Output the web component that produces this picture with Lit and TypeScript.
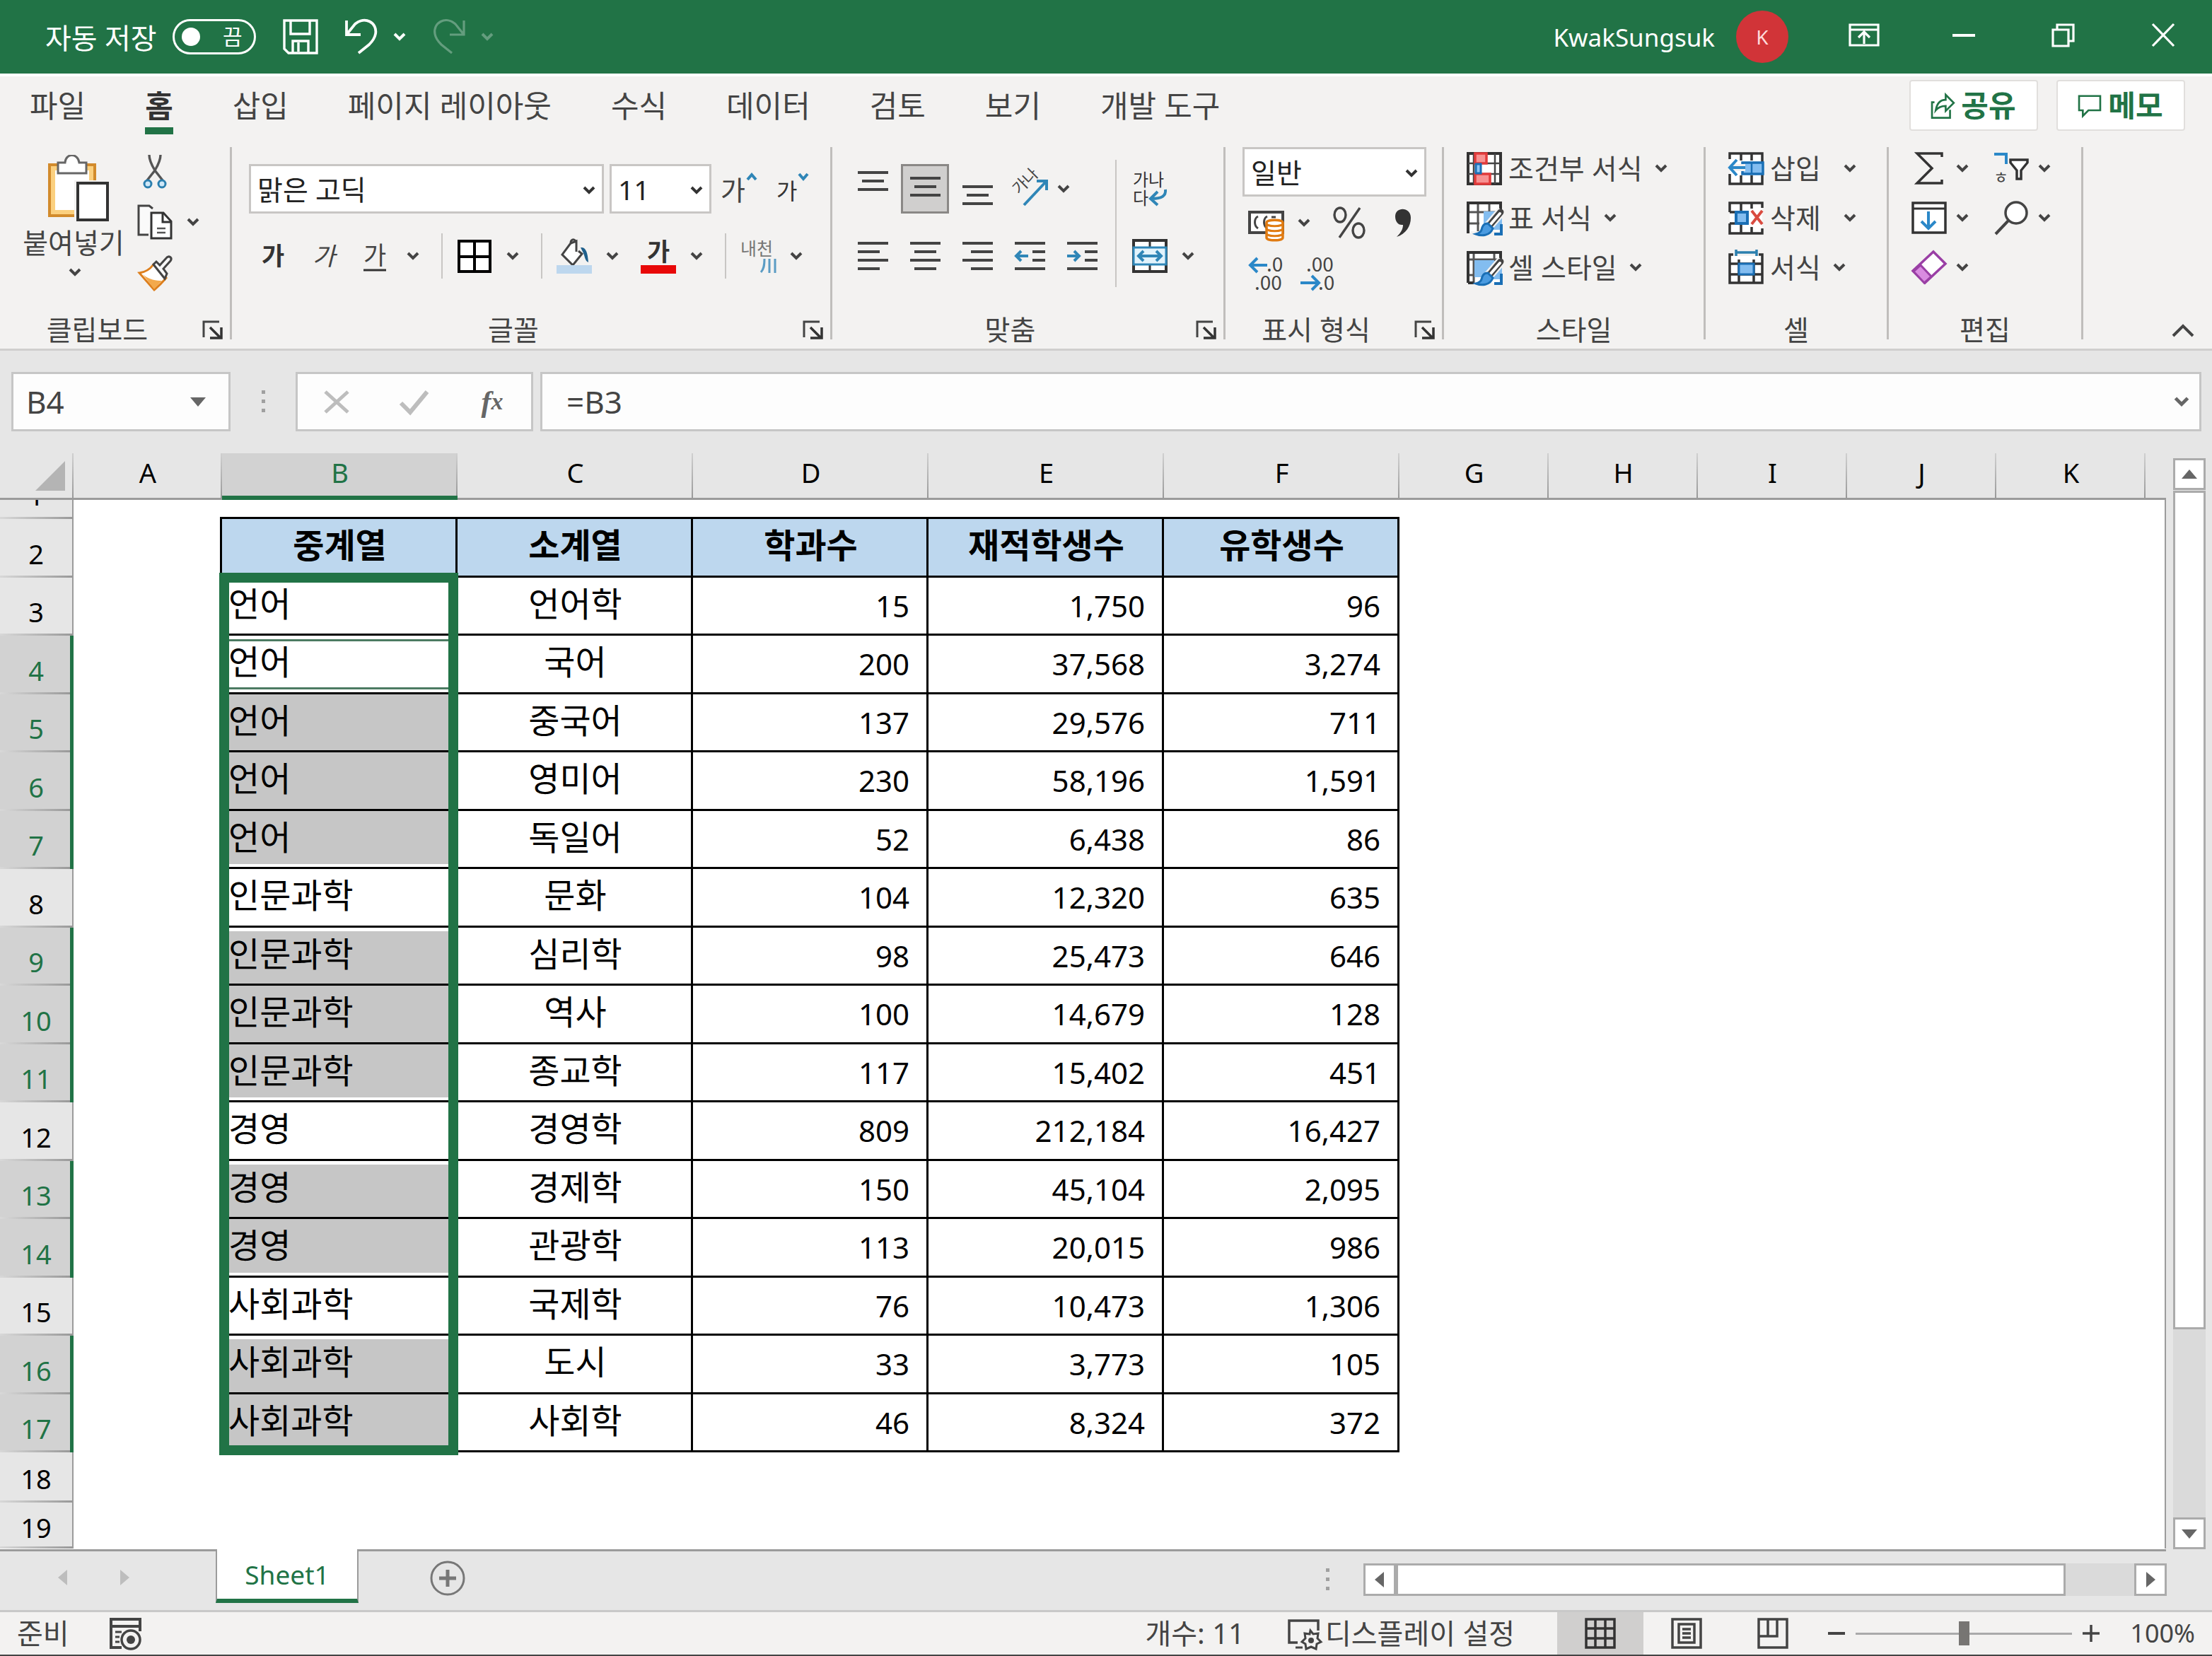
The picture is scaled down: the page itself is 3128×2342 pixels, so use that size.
import { LitElement, html, svg, css, nothing } from "lit";
import { customElement, property } from "lit/decorators.js";
import { classMap } from "lit/directives/class-map.js";

type Row = [string, string, string, string, string];

const DATA: Row[] = [
  ["언어", "언어학", "15", "1,750", "96"],
  ["언어", "국어", "200", "37,568", "3,274"],
  ["언어", "중국어", "137", "29,576", "711"],
  ["언어", "영미어", "230", "58,196", "1,591"],
  ["언어", "독일어", "52", "6,438", "86"],
  ["인문과학", "문화", "104", "12,320", "635"],
  ["인문과학", "심리학", "98", "25,473", "646"],
  ["인문과학", "역사", "100", "14,679", "128"],
  ["인문과학", "종교학", "117", "15,402", "451"],
  ["경영", "경영학", "809", "212,184", "16,427"],
  ["경영", "경제학", "150", "45,104", "2,095"],
  ["경영", "관광학", "113", "20,015", "986"],
  ["사회과학", "국제학", "76", "10,473", "1,306"],
  ["사회과학", "도시", "33", "3,773", "105"],
  ["사회과학", "사회학", "46", "8,324", "372"],
];
const HEADERS = ["중계열", "소계열", "학과수", "재적학생수", "유학생수"];
const COLUMNS = ["A", "B", "C", "D", "E", "F", "G", "H", "I", "J", "K"];
const SELECTED = new Set([4, 5, 6, 7, 9, 10, 11, 13, 14, 16, 17]);
const ACTIVE_ROW = 4;

const hlines = (segs: number[][]) =>
  segs.map(([x1, x2, y]) => svg`<path d="M${x1} ${y}H${x2}" stroke="#444" stroke-width="4"/>`);

const gridPen = svg`
  <path d="M24 16h26v26h-26z" fill="#83bdf0"/>
  <path d="M49 34v14h-10" stroke="#1a6fb5" stroke-width="4"/>
  <path d="M50 15L30 38" stroke="#f3f2f1" stroke-width="14"/>
  <path d="M48 17L33 35" stroke="#444" stroke-width="9" stroke-linecap="round"/>
  <path d="M47 19L34 34" stroke="#fff" stroke-width="4" stroke-linecap="round"/>
  <path d="M30 33c-7 0-8 5-9 9-1 3-4 5-8 6 8 3 20 3 24-8z" fill="#4a9be0" stroke="#1a6fb5" stroke-width="3"/>`;

const ICONS: Record<string, unknown> = {
  save: svg`<path d="M2 2h46v46H8l-6-6z M11 2v19h27V2 M14 48V31h22v17 M22 33v13" stroke="currentColor" stroke-width="3.4"/>`,
  undo: svg`<path d="M4 2v20h20 M4 22L16 7c14-12 32-2 29 14-1 6-5 11-9 15L21 48" stroke="currentColor" stroke-width="3.8"/>`,
  redo: svg`<path d="M46 2v20H26 M46 22L34 7C20-5 2 5 5 21c1 6 5 11 9 15l15 12" stroke="currentColor" stroke-width="3.2"/>`,
  display: svg`<path d="M5 10h40v29H5z M5 17h40 M25 37V21 M17 28l8-8 8 8" stroke="currentColor" stroke-width="3.2"/>`,
  minimize: svg`<path d="M9 25h32" stroke="currentColor" stroke-width="4"/>`,
  restore: svg`<path d="M10 17h22v23H10z M16 17v-7h23v23h-6" stroke="currentColor" stroke-width="3.2"/>`,
  close: svg`<path d="M10 9l30 31 M40 9L10 40" stroke="currentColor" stroke-width="3.2"/>`,
  share: svg`<path d="M12 20H8v25h29V32" stroke="currentColor" stroke-width="3"/><path d="M14 33c2-12 8-17 16-17V8l13 13-13 13v-8c-7 0-12 2-16 7z" stroke="currentColor" stroke-width="3"/>`,
  memo: svg`<path d="M8 10h34v23H23L14 42v-9H8z" stroke="currentColor" stroke-width="3"/>`,
  cut: svg`<path d="M17 2c0 8 5 17 8 22l11 14 M33 2c0 8-5 17-8 22L14 38" stroke="#555" stroke-width="3.4"/><circle cx="15" cy="43" r="5" fill="#cfe8f8" stroke="#2b7fae" stroke-width="3"/><circle cx="35" cy="43" r="5" fill="#cfe8f8" stroke="#2b7fae" stroke-width="3"/>`,
  copy: svg`<path d="M22 6l-5-4H2v41h14" fill="#fafafa" stroke="#444" stroke-width="3"/><path d="M20 12h17l11 12v24H20z" fill="#fff" stroke="#333" stroke-width="3"/><path d="M36 12v13h12" stroke="#333" stroke-width="3"/><path d="M28 34h12 M28 40h12" stroke="#555" stroke-width="2.5"/>`,
  painter: svg`<path d="M3 25c8-1 15-5 20-12l18 19c-5 6-11 12-17 17z" fill="#fff" stroke="#dd7f1d" stroke-width="3"/><path d="M8 27c9 8 19 9 27 9L24 48z" fill="#f3a94c"/><path d="M23 13l4-4 5 5L42 3c4-3 8 1 5 5L37 19l5 7-3 7z" fill="#f8f8f8" stroke="#444" stroke-width="3"/>`,
  grow: svg`<text x="-1" y="41" font-size="38" fill="#444">가</text><path d="M37 12l6-7 6 7" stroke="#2f86b7" stroke-width="4"/>`,
  shrink: svg`<text x="1" y="40" font-size="32" fill="#333">가</text><path d="M33 4l6 7 6-7" stroke="#2f86b7" stroke-width="4"/>`,
  bold: svg`<text x="9" y="38" font-size="35" font-weight="700" fill="#333">가</text>`,
  italic: svg`<text x="9" y="38" font-size="35" font-style="italic" fill="#444">가</text>`,
  underline: svg`<text x="9" y="37" font-size="35" fill="#444">가</text><path d="M9 45h32" stroke="#333" stroke-width="3"/>`,
  borders: svg`<path d="M3 4h44v43H3z M25 4v43 M3 26h44" fill="#fff" stroke="#000" stroke-width="4"/>`,
  fill: svg`<path d="M27 4c-3-4-7-2-7 3L8 23l15 15 13-16-5-4" fill="#fff" stroke="#444" stroke-width="3"/><path d="M20 7l8-3v15" stroke="#444" stroke-width="3"/><path d="M34 13c7-1 10 6 11 21-5-2-5-9-7-13z" fill="#1f5f8b"/><path d="M0 38h50v12H0z" fill="#bdd7ee"/>`,
  color: svg`<text x="9" y="32" font-size="35" font-weight="700" fill="#333">가</text><path d="M0 38h50v12H0z" fill="#e80808"/>`,
  phonetic: svg`<text x="0" y="24" font-size="25" fill="#777">내천</text><path d="M34 29c0 10-1 15-5 19 M41 29v20 M49 29v20" stroke="#5b9cc4" stroke-width="3"/>`,
  vtop: svg`${hlines([[4, 47, 2], [10, 41, 14], [4, 47, 26]])}`,
  vmid: svg`${hlines([[4, 47, 10], [10, 41, 22], [4, 47, 34]])}`,
  vbot: svg`${hlines([[4, 47, 22], [10, 41, 34], [4, 47, 46]])}`,
  left: svg`${hlines([[4, 47, 7], [4, 35, 19], [4, 47, 31], [4, 35, 43]])}`,
  center: svg`${hlines([[4, 47, 7], [10, 41, 19], [4, 47, 31], [10, 41, 43]])}`,
  right: svg`${hlines([[4, 47, 7], [16, 47, 19], [4, 47, 31], [16, 47, 43]])}`,
  outdent: svg`${hlines([[4, 47, 7], [29, 47, 19], [29, 47, 31], [4, 47, 43]])}<path d="M23 25H6 M13 18l-7 7 7 7" stroke="#2f86b7" stroke-width="4"/>`,
  indent: svg`${hlines([[4, 47, 7], [29, 47, 19], [29, 47, 31], [4, 47, 43]])}<path d="M4 25h17 M14 18l7 7-7 7" stroke="#2f86b7" stroke-width="4"/>`,
  orient: svg`<text transform="translate(10 34) rotate(-45)" x="0" y="0" font-size="22" fill="#444">가나</text><path d="M17 48L48 15 M35 14h14v13" stroke="#2f86b7" stroke-width="4"/>`,
  wrap: svg`<text x="1" y="21" font-size="24" fill="#333">가나</text><text x="1" y="47" font-size="24" fill="#333">다</text><path d="M47 26c1 9-5 13-19 13 M36 29L26 39l10 9" stroke="#2f86b7" stroke-width="4"/>`,
  merge: svg`<path d="M2 3h46v44H2z" fill="#fff" stroke="#333" stroke-width="4"/><path d="M25 3v9 M25 38v9" stroke="#333" stroke-width="3"/><path d="M2 13h46v24H2z" fill="#e2f3fc" stroke="#2f86b7" stroke-width="3"/><path d="M10 25h30 M16 18l-7 7 7 7 M34 18l7 7-7 7" stroke="#2f86b7" stroke-width="4"/>`,
  currency: svg`<path d="M2 10h47v29H2z" fill="#fff" stroke="#444" stroke-width="4"/><path d="M14 16c-6 3-6 13 0 17 M27 16c-6 3-6 13 0 17 M33 17h6" stroke="#444" stroke-width="3"/><path d="M26 25c0-5 23-5 23 0v21c0 5-23 5-23 0z" fill="#fff" stroke="#e07b12" stroke-width="3.5"/><path d="M26 26c0 5 23 5 23 0 M26 33c0 5 23 5 23 0 M26 40c0 5 23 5 23 0" stroke="#e07b12" stroke-width="3"/>`,
  percent: svg`<ellipse cx="12" cy="14" rx="8" ry="10" stroke="#444" stroke-width="3.4"/><ellipse cx="38" cy="36" rx="8" ry="10" stroke="#444" stroke-width="3.4"/><path d="M40 4L11 46" stroke="#444" stroke-width="3.4"/>`,
  comma: svg`<path d="M10 16c0-14 22-14 22 2 0 12-7 23-20 27 6-6 9-11 9-17-7 1-11-5-11-12z" fill="#333"/>`,
  incdec: svg`<text x="26" y="22" font-size="28" fill="#444">.0</text><text x="9" y="48" font-size="28" fill="#444">.00</text><path d="M27 13H3 M13 3L3 13l10 10" stroke="#2b88c8" stroke-width="4"/>`,
  decdec: svg`<text x="9" y="22" font-size="28" fill="#444">.00</text><text x="26" y="48" font-size="28" fill="#444">.0</text><path d="M1 38h25 M17 28l10 10-10 10" stroke="#2b88c8" stroke-width="4"/>`,
  cond: svg`<path d="M2 4h46v43H2z" fill="#fff" stroke="#333" stroke-width="4"/><path d="M10 4v43 M40 4v43 M2 18h46 M2 33h46" stroke="#444" stroke-width="2.5"/><path d="M12 4h16v14H12z M12 33h21v14H12z" fill="#f79292" stroke="#e23b3b" stroke-width="3.5"/><path d="M13 19h7v13h-7z" fill="#8cc4f5" stroke="#1a6fb5" stroke-width="3"/>`,
  tablefmt: svg`<path d="M2 4h46v40H2z" fill="#fff"/><path d="M16 4v40 M32 4v14 M2 17h46 M2 33h16" stroke="#555" stroke-width="3"/><path d="M2 47V4h46v12" stroke="#333" stroke-width="4"/>${gridPen}`,
  cellstyle: svg`<path d="M2 4h46v43H2z" fill="#fff"/><path d="M10 4v43 M39 4v12 M2 14h46 M2 36h12" stroke="#555" stroke-width="3"/><path d="M2 47V4h46v12 M2 47h8" stroke="#333" stroke-width="4"/><path d="M11 15h28v24H11z" fill="#83bdf0"/>${gridPen}`,
  insert: svg`<path d="M2 4h46v43H2z" fill="#fff"/><path d="M2 12V4h46v43H2V33 M18 4v10 M33 4v10 M18 35v12 M33 35v12" stroke="#333" stroke-width="3.5"/><path d="M20 17h29v16H20z" fill="#83bdf0" stroke="#1a6fb5" stroke-width="3.5"/><path d="M33 17v16" stroke="#1a6fb5" stroke-width="2.5"/><path d="M24 24H2" stroke="#f3f2f1" stroke-width="10"/><path d="M24 24H3 M12 13L2 24l10 11" stroke="#2b88c8" stroke-width="4"/>`,
  remove: svg`<path d="M2 4h46v43H2z" fill="#fff"/><path d="M2 17V4h46v7 M2 33v14h46v-7 M2 17h10 M2 33h10 M18 4v12 M33 4v8 M18 35v12 M33 38v9" stroke="#333" stroke-width="3.5"/><path d="M11 17h16v16H11z" fill="#83bdf0" stroke="#1a6fb5" stroke-width="4"/><path d="M33 15l15 19 M48 15L33 34" stroke="#d94b40" stroke-width="4"/>`,
  format: svg`<path d="M2 9h46v38H2z" fill="#fff"/><path d="M7 7H2v40h46V7h-5 M2 20h46 M2 35h46 M15 14v33 M36 14v33" stroke="#333" stroke-width="3.5"/><path d="M15 20h21v15H15z" fill="#83bdf0" stroke="#1a6fb5" stroke-width="3"/><path d="M11 4h29 M11 0v9 M40 0v9" stroke="#2b7fae" stroke-width="3.5"/>`,
  sum: svg`<path d="M43 9V4H8l21 21L8 46h35v-5" stroke="#333" stroke-width="3.5"/>`,
  sort: svg`<path d="M1 5h17v14" stroke="#2b88c8" stroke-width="4"/><text x="0" y="46" font-size="23" fill="#444">ㅎ</text><path d="M24 13h24v4l-9 11v12h-6V28l-9-11z" fill="#fff" stroke="#333" stroke-width="3.5"/>`,
  filldown: svg`<path d="M2 4h46v42H2z" fill="#fff" stroke="#333" stroke-width="3.5"/><path d="M2 12h46" stroke="#333" stroke-width="3"/><path d="M24 16v24 M14 30l10 10 10-10" stroke="#2b88c8" stroke-width="4"/>`,
  find: svg`<circle cx="32" cy="18" r="15" fill="#fff" stroke="#444" stroke-width="3.5"/><path d="M21 29L3 48" stroke="#444" stroke-width="4"/>`,
  erase: svg`<path d="M31 3l17 17-29 27L2 30z" fill="#fff" stroke="#9a3fa5" stroke-width="3.5"/><path d="M13 22l15 16-10 9L3 31z" fill="#d98be0" stroke="#9a3fa5" stroke-width="3"/>`,
  record: svg`<path d="M20 45H5V5h41v17 M5 15h41" stroke="#444" stroke-width="4"/><path d="M11 23h9 M11 30h6 M11 37h6" stroke="#444" stroke-width="3"/><circle cx="33" cy="34" r="13" fill="#f3f2f1" stroke="#444" stroke-width="3.5"/><circle cx="33" cy="34" r="6" fill="#444"/>`,
  screen: svg`<path d="M15 38H3V7h41v14" stroke="#444" stroke-width="3.5"/><path d="M12 45h10" stroke="#444" stroke-width="3"/><path d="M33 21l4 5 7-1-1 7 5 5-6 3-1 7-7-3-7 3-1-7-5-3 5-5-1-7 7 1z" fill="#f3f2f1" stroke="#444" stroke-width="3"/><circle cx="34" cy="35" r="4" fill="#444"/>`,
  normal: svg`<path d="M5 5h40v40H5z M18 5v40 M32 5v40 M5 18h40 M5 32h40" stroke="#333" stroke-width="3.5"/>`,
  layout: svg`<path d="M5 5h40v40H5z M14 12h22v26H14z M19 19h12 M19 25h12 M19 31h12" stroke="#444" stroke-width="3.5"/>`,
  breaks: svg`<path d="M5 5h40v40H5z M5 29h26V5 M18 5v24" stroke="#444" stroke-width="3.5"/>`,
  minus: svg`<path d="M13 25h24" stroke="#444" stroke-width="4"/>`,
  plus: svg`<path d="M13 25h24 M25 13v24" stroke="#444" stroke-width="3.5"/>`,
  add: svg`<circle cx="25" cy="25" r="23" stroke="#777" stroke-width="3"/><path d="M13 25h24 M25 13v24" stroke="#777" stroke-width="5"/>`,
  cancel: svg`<path d="M9 11l32 29 M41 11L9 40" stroke="#bdbdbd" stroke-width="5"/>`,
  accept: svg`<path d="M6 27l13 13L43 11" stroke="#bdbdbd" stroke-width="6"/>`,
  collapse: svg`<path d="M11 32l14-14 14 14" stroke="#444" stroke-width="4"/>`,
  launcher: svg`<path d="M13 36V14h22" stroke="#444" stroke-width="3"/><path d="M22 22l15 15 M38 22v15H22" stroke="#333" stroke-width="3.5"/>`,
  down: svg`<path d="M14 19h22L25 32z" fill="#666"/>`,
  up: svg`<path d="M14 31h22L25 18z" fill="#666"/>`,
  prev: svg`<path d="M31 14v22L18 25z" fill="currentColor"/>`,
  next: svg`<path d="M19 14v22l13-11z" fill="currentColor"/>`,
  dots: svg`<path d="M23 9h5v5h-5z M23 22h5v5h-5z M23 35h5v5h-5z" fill="#a0a0a0"/>`,
};

const icon = (name: string) =>
  html`<svg class="icon" viewBox="0 0 50 50" fill="none" aria-hidden="true">${ICONS[name]}</svg>`;
const chevron = html`<svg class="chev" viewBox="0 0 18 12" fill="none" aria-hidden="true"><path d="M2 2l7 7 7-7" stroke="currentColor" stroke-width="4"/></svg>`;

const shared = css`
  :host, * { box-sizing: border-box; }
  button, select, input {
    font: inherit; color: inherit; margin: 0; padding: 0;
    border: 0; background: none; border-radius: 0; appearance: none; outline: 0;
  }
  button { display: flex; align-items: center; white-space: nowrap; }
  .icon { display: block; flex: none; width: 50px; height: 50px; overflow: visible; font-family: "Noto Sans CJK KR", sans-serif; }
  .chev { display: block; flex: none; width: 18px; height: 12px; }
`;

@customElement("title-bar")
class TitleBar extends LitElement {
  static styles = [shared, css`
    :host { display: flex; align-items: center; height: 104px; padding: 0 44px 0 64px; background: #217346; color: #fff; font-size: 40px; }
    .autosave { display: flex; align-items: center; gap: 22px; }
    .toggle { display: flex; align-items: center; justify-content: space-between; width: 118px; height: 50px; padding: 0 16px 0 10px; border: 3px solid #fff; border-radius: 25px; font-size: 30px; line-height: 44px; }
    .knob { width: 26px; height: 26px; border-radius: 50%; background: #fff; }
    .quick { display: flex; align-items: center; gap: 36px; padding-left: 38px; }
    .split { gap: 20px; }
    .off { opacity: 0.3; }
    .user { display: flex; align-items: center; gap: 30px; margin-left: auto; font-size: 35px; }
    .avatar { display: grid; place-items: center; width: 74px; height: 74px; border-radius: 50%; background: #d13438; font-size: 28px; color: #ffd9d9; }
    .window { display: flex; gap: 91px; padding: 0 0 4px 82px; }
  `];
  render() {
    return html`
      <label class="autosave">자동 저장
        <span class="toggle"><input class="knob" type="checkbox" /><span>끔</span></span>
      </label>
      <div class="quick">
        <button aria-label="저장">${icon("save")}</button>
        <button class="split" aria-label="실행 취소">${icon("undo")}${chevron}</button>
        <button class="split off" aria-label="다시 실행">${icon("redo")}${chevron}</button>
      </div>
      <div class="user"><span>KwakSungsuk</span><span class="avatar">K</span></div>
      <div class="window">
        <button aria-label="리본 메뉴 표시 옵션">${icon("display")}</button>
        <button aria-label="최소화">${icon("minimize")}</button>
        <button aria-label="이전 크기로 복원">${icon("restore")}</button>
        <button aria-label="닫기">${icon("close")}</button>
      </div>`;
  }
}

@customElement("ribbon-tabs")
class RibbonTabs extends LitElement {
  static styles = [shared, css`
    :host { display: flex; align-items: flex-start; justify-content: space-between; height: 104px; padding: 0 38px 0 42px; border-top: 4px solid #fff; background: #f3f2f1; color: #444; font-size: 43px; }
    nav { display: flex; gap: 84px; }
    a { display: block; padding-top: 16px; height: 82px; line-height: 52px; border-bottom: 10px solid transparent; color: inherit; text-decoration: none; white-space: nowrap; }
    .current { border-color: #217346; font-weight: 700; color: #333; }
    .actions { display: flex; gap: 26px; padding-top: 5px; }
    .action { width: 182px; height: 72px; justify-content: center; gap: 4px; padding-right: 6px; border: 2px solid #e1dfdd; border-radius: 4px; background: #fff; color: #217346; font-size: 42px; font-weight: 700; line-height: 52px; }
    .action .icon { width: 44px; height: 44px; }
  `];
  render() {
    const tabs = ["파일", "홈", "삽입", "페이지 레이아웃", "수식", "데이터", "검토", "보기", "개발 도구"];
    return html`
      <nav>${tabs.map((t) => html`<a href="#" class=${classMap({ current: t === "홈" })}>${t}</a>`)}</nav>
      <div class="actions">
        <button class="action">${icon("share")}공유</button>
        <button class="action">${icon("memo")}메모</button>
      </div>`;
  }
}

@customElement("ribbon-group")
class RibbonGroup extends LitElement {
  @property() label = "";
  @property({ type: Boolean }) launcher = false;
  static styles = [shared, css`
    :host { display: flex; flex-direction: column; height: 272px; border-right: 3px solid #c0bebc; }
    .body { flex: none; height: 232px; }
    .foot { flex: none; display: flex; align-items: center; height: 52px; line-height: 52px; }
    .name { flex: 1; text-align: center; white-space: nowrap; }
  `];
  render() {
    return html`<div class="body"><slot></slot></div>
      <div class="foot"><span class="name">${this.label}</span>
      ${this.launcher ? html`<button aria-label="${this.label} 설정">${icon("launcher")}</button>` : nothing}</div>`;
  }
}

@customElement("ribbon-bar")
class RibbonBar extends LitElement {
  static styles = [shared, css`
    :host { display: flex; height: 288px; border-bottom: 3px solid #d0cfce; background: #f3f2f1; color: #444; font-size: 39px; }
    .clip { width: 328px; }
    .font { width: 849px; }
    .align { width: 556px; }
    .number { width: 309px; }
    .styles { width: 370px; }
    .cells { width: 259px; }
    .edit { width: 275px; }
    .line { display: flex; align-items: center; height: 70px; }
    .clipboard { display: flex; gap: 18px; padding: 4px 0 0 32px; }
    .paste { flex-direction: column; width: 144px; height: 190px; line-height: 52px; }
    .paste-art { width: 86px; height: 94px; margin: 7px 0 4px 14px; }
    .paste .chev { margin: 10px 0 0 4px; }
    .stack { display: flex; flex-direction: column; gap: 12px; }
    .stack button { height: 60px; }
    .split { gap: 20px; }
    .tight { gap: 14px; }
    .rows { display: flex; flex-direction: column; gap: 25px; padding: 24px 0 0 24px; }
    .boxes { gap: 8px; }
    .box { position: relative; display: flex; align-items: center; height: 70px; border: 3px solid #c8c6c4; background: #fff; color: #222; }
    .box select { width: 100%; height: 100%; padding-left: 9px; }
    .box .chev { position: absolute; right: 9px; top: 28px; pointer-events: none; color: #333; }
    .family { width: 502px; }
    .size { width: 144px; }
    .sizers { display: flex; gap: 27px; padding-left: 6px; }
    .marks { padding-left: 9px; }
    .marks > button + button { margin-left: 22px; }
    .rule { width: 2px; height: 64px; margin: 0 20px 0 31px; background: #c8c6c4; }
    .marks > .gap.gap { margin-left: 31px; }
    .alignment { display: flex; padding: 0 0 0 32px; }
    .alignment .rows { padding-left: 0; }
    .alignment .line { gap: 24px; }
    .pressed { height: 70px; padding: 0 6px; margin: 0 -9px; border: 3px solid #8a8886; background: #d0cfce; }
    .divider { width: 2px; height: 180px; margin: 18px 22px 0; background: #c8c6c4; }
    .numbers { display: flex; flex-direction: column; gap: 2px; padding-left: 24px; }
    .format { width: 260px; }
    .numbers .line { gap: 30px; padding-left: 8px; }
    .decimals.line { gap: 23px; }
    .list { display: flex; flex-direction: column; gap: 10px; padding-left: 32px; }
    .list button { height: 60px; gap: 9px; line-height: 52px; }
    .list .chev { margin-left: 8px; }
    .list .apart .chev { margin-left: 23px; }
    .tools { display: grid; grid-template-columns: 82px 82px; gap: 10px 34px; padding-left: 32px; }
    .tools button { height: 60px; gap: 13px; }
    .collapse { margin: auto 16px 0 auto; }
  `];
  private btn(name: string, label: string, cls = "") {
    return html`<button class=${cls} aria-label=${label}>${icon(name)}</button>`;
  }
  private split(name: string, label: string, cls = "split") {
    return html`<button class=${cls} aria-label=${label}>${icon(name)}${chevron}</button>`;
  }
  render() {
    return html`
      <ribbon-group class="clip" label="클립보드" launcher>
        <div class="clipboard">
          <button class="paste">
            <svg class="paste-art" viewBox="0 0 86 94" fill="none" aria-hidden="true">
              <path d="M2 14h64v72H2z" fill="#fbd07f" stroke="#d28b2c" stroke-width="4"/>
              <path d="M10 22h48v56H10z" fill="#fff"/>
              <path d="M14 26V11h10c1-14 18-14 20 0h10v15z" fill="#fff" stroke="#666" stroke-width="3"/>
              <path d="M37 36h49v58H37z" fill="#f3f2f1"/>
              <path d="M42 40h42v52H42z" fill="#fff" stroke="#333" stroke-width="4"/>
            </svg>
            붙여넣기${chevron}
          </button>
          <div class="stack">
            ${this.btn("cut", "잘라내기")}${this.split("copy", "복사")}${this.btn("painter", "서식 복사")}
          </div>
        </div>
      </ribbon-group>
      <ribbon-group class="font" label="글꼴" launcher>
        <div class="rows">
          <div class="line boxes">
            <label class="box family"><select aria-label="글꼴 이름"><option>맑은 고딕</option></select>${chevron}</label>
            <label class="box size"><select aria-label="글꼴 크기"><option>11</option></select>${chevron}</label>
            <div class="sizers">${this.btn("grow", "글꼴 크게")}${this.btn("shrink", "글꼴 작게")}</div>
          </div>
          <div class="line marks">
            ${this.btn("bold", "굵게")}${this.btn("italic", "기울임꼴")}${this.split("underline", "밑줄")}
            <span class="rule"></span>${this.split("borders", "테두리")}
            <span class="rule"></span>${this.split("fill", "채우기 색")}${this.split("color", "글꼴 색", "split gap")}
            <span class="rule"></span>${this.split("phonetic", "윗주")}
          </div>
        </div>
      </ribbon-group>
      <ribbon-group class="align" label="맞춤" launcher>
        <div class="alignment">
          <div class="rows">
            <div class="line">
              ${this.btn("vtop", "위쪽 맞춤")}${this.btn("vmid", "가운데 맞춤", "pressed")}${this.btn("vbot", "아래쪽 맞춤")}
              ${this.split("orient", "방향", "tight")}
            </div>
            <div class="line">
              ${this.btn("left", "왼쪽 맞춤")}${this.btn("center", "가로 가운데 맞춤")}${this.btn("right", "오른쪽 맞춤")}
              ${this.btn("outdent", "내어쓰기")}${this.btn("indent", "들여쓰기")}
            </div>
          </div>
          <span class="divider"></span>
          <div class="rows">
            <div class="line">${this.btn("wrap", "자동 줄 바꿈")}</div>
            <div class="line">${this.split("merge", "병합하고 가운데 맞춤")}</div>
          </div>
        </div>
      </ribbon-group>
      <ribbon-group class="number" label="표시 형식" launcher>
        <div class="numbers">
          <label class="box format"><select aria-label="표시 형식"><option>일반</option></select>${chevron}</label>
          <div class="line">${this.split("currency", "회계 표시 형식")}${this.btn("percent", "백분율")}${this.btn("comma", "쉼표")}</div>
          <div class="line decimals">${this.btn("incdec", "자릿수 늘림")}${this.btn("decdec", "자릿수 줄임")}</div>
        </div>
      </ribbon-group>
      <ribbon-group class="styles" label="스타일">
        <div class="list">
          <button>${icon("cond")}조건부 서식${chevron}</button>
          <button>${icon("tablefmt")}표 서식${chevron}</button>
          <button>${icon("cellstyle")}셀 스타일${chevron}</button>
        </div>
      </ribbon-group>
      <ribbon-group class="cells" label="셀">
        <div class="list">
          <button class="apart">${icon("insert")}삽입${chevron}</button>
          <button class="apart">${icon("remove")}삭제${chevron}</button>
          <button>${icon("format")}서식${chevron}</button>
        </div>
      </ribbon-group>
      <ribbon-group class="edit" label="편집">
        <div class="tools">
          ${this.split("sum", "합계", "")}${this.split("sort", "정렬 및 필터", "")}
          ${this.split("filldown", "채우기", "")}${this.split("find", "찾기 및 선택", "")}
          ${this.split("erase", "지우기", "")}
        </div>
      </ribbon-group>
      ${this.btn("collapse", "리본 메뉴 축소", "collapse")}`;
  }
}

@customElement("formula-bar")
class FormulaBar extends LitElement {
  static styles = [shared, css`
    :host { display: flex; align-items: flex-start; gap: 10px; height: 145px; padding: 30px 15px 0 16px; background: #e6e6e6; color: #444; font-size: 44px; }
    .field { display: flex; align-items: center; height: 84px; border: 3px solid #c6c6c6; background: #fdfdfd; }
    .field input { flex: 1; min-width: 0; height: 100%; }
    .name { width: 310px; padding: 0 18px; }
    .grip { height: 84px; padding: 17px 11px; }
    .tools { width: 336px; justify-content: space-around; padding: 0; }
    .fx { width: 50px; justify-content: center; font: italic 700 42px "Liberation Serif", serif; color: #666; }
    .sub { font-size: 34px; }
    .formula { flex: 1; padding: 0 14px 0 34px; }
    .formula .chev { width: 22px; height: 16px; color: #666; }
  `];
  render() {
    return html`
      <div class="field name"><input aria-label="이름 상자" .value=${"B4"} /><button aria-label="이름 목록">${icon("down")}</button></div>
      <span class="grip">${icon("dots")}</span>
      <div class="field tools">
        <button aria-label="취소">${icon("cancel")}</button>
        <button aria-label="입력">${icon("accept")}</button>
        <button class="fx" aria-label="함수 삽입">f<span class="sub">x</span></button>
      </div>
      <div class="field formula"><input aria-label="수식 입력줄" .value=${"=B3"} /><button aria-label="수식 입력줄 확장">${chevron}</button></div>`;
  }
}

@customElement("sheet-grid")
class SheetGrid extends LitElement {
  static styles = [shared, css`
    :host { display: flex; flex: 1; background: #e6e6e6; color: #000; }
    .sheet { position: relative; flex: 1; min-width: 0; background: #fff; }
    table { width: 100%; table-layout: fixed; border-spacing: 0; }
    td, th { padding: 0; font-weight: 400; }
    .w-row { width: 104px; }
    .w-a { width: 210px; }
    .w-data { width: 333px; }
    .w-rest { width: 211px; }
    .col { height: 66px; padding-bottom: 10px; border-bottom: 3px solid #9b9b9b; background: linear-gradient(#d0d0d0, #999) right / 2px 100% no-repeat #e6e6e6; font-size: 38px; line-height: 40px; }
    .col.on { border-bottom: 6px solid #217346; background-color: #d2d2d2; color: #217346; padding-bottom: 7px; }
    .col.last { background: #e6e6e6; }
    .corner { background-color: #e6e6e6; }
    .corner svg { display: block; width: 42px; height: 42px; margin: 11px 0 0 50px; }
    .row { vertical-align: bottom; background: linear-gradient(90deg, #d8d8d8, #999) bottom / 100% 3px no-repeat #e6e6e6; border-right: 2px solid #9b9b9b; font-size: 38px; line-height: 52px; }
    .row div { padding-bottom: 8px; }
    .row.on { background-color: #d2d2d2; border-right: 5px solid #217346; color: #217346; padding-left: 3px; }
    .first-row { height: 27px; }
    .first-row div { display: flex; flex-direction: column; justify-content: flex-end; align-items: center; height: 27px; overflow: hidden; }
    .even { height: 83px; }
    .odd { height: 82px; }
    .r18 { height: 71px; }
    .r19 { height: 65px; }
    .r19 div { padding-bottom: 4px; }
    .edge { border-right: 2px solid #9b9b9b; }
    .cell { border-right: 3px solid #000; border-bottom: 3px solid #000; text-align: center; font-size: 48px; line-height: 60px; padding: 0 0 6px 3px; white-space: nowrap; }
    .under { border-bottom: 3px solid #000; }
    .before { border-right: 3px solid #000; }
    .nook { background: linear-gradient(#000, #000) right bottom / 3px 3px no-repeat; }
    .head { background: #bdd7ee; font-weight: 700; }
    .num { text-align: right; padding: 0 24px 0 0; font-size: 42px; }
    .key { text-align: left; padding-left: 9px; }
    .key.sel { background: #c6c6c6; }
    .sel.start { box-shadow: inset 0 5px #fff; }
    .sel.end { box-shadow: inset 0 -4px #fff; }
    .key.active { background: linear-gradient(#4c7b62, #4c7b62) 0 5px / 100% 3px no-repeat, linear-gradient(#4c7b62, #4c7b62) 0 calc(100% - 4px) / 100% 3px no-repeat #fff; }
    .outline { position: absolute; left: 310px; top: 169px; width: 338px; height: 1248px; border: 14px solid #217346; pointer-events: none; }
    .scroll { display: flex; flex-direction: column; width: 65px; padding: 7px 8px 0 10px; }
    .arrow { justify-content: center; width: 46px; height: 45px; border: 3px solid #ababab; background: #fff; }
    .thumb { flex: 1187; width: 46px; margin-top: 1px; border: 3px solid #ababab; background: #fff; }
    .track { flex: 267; background: #dadada; width: 46px; }
  `];
  private keyClass(n: number) {
    const on = SELECTED.has(n);
    return classMap({
      cell: true, key: true, sel: on && n !== ACTIVE_ROW, active: n === ACTIVE_ROW,
      start: on && !SELECTED.has(n - 1), end: on && !SELECTED.has(n + 1),
    });
  }
  private fill(n: number) {
    return Array.from({ length: n }, (_, i) => html`<td class=${i === n - 1 ? "edge" : ""}></td>`);
  }
  render() {
    return html`
      <div class="sheet">
        <table>
          <colgroup>
            <col class="w-row" /><col class="w-a" />
            ${HEADERS.map(() => html`<col class="w-data" />`)}
            ${COLUMNS.slice(6).map(() => html`<col class="w-rest" />`)}
            <col />
          </colgroup>
          <thead>
            <tr>
              <th class="col corner"><svg viewBox="0 0 42 42" aria-hidden="true"><path d="M42 0v42H0z" fill="#b4b4b4"/></svg></th>
              ${COLUMNS.map((c) => html`<th scope="col" class=${classMap({ col: true, on: c === "B" })}>${c}</th>`)}
              <th class="col last"></th>
            </tr>
          </thead>
          <tbody>
            <tr class="first-row">
              <th scope="row" class="row"><div>1</div></th><td class="nook"></td>
              ${HEADERS.map(() => html`<td class="under"></td>`)}${this.fill(6)}
            </tr>
            <tr class="even">
              <th scope="row" class="row"><div>2</div></th><td class="before"></td>
              ${HEADERS.map((h) => html`<td class="cell head">${h}</td>`)}${this.fill(6)}
            </tr>
            ${DATA.map((r, i) => {
              const n = i + 3;
              return html`<tr class=${n % 2 ? "odd" : "even"}>
                <th scope="row" class=${classMap({ row: true, on: SELECTED.has(n) })}><div>${n}</div></th>
                <td class="before"></td>
                <td class=${this.keyClass(n)}>${r[0]}</td>
                <td class="cell">${r[1]}</td>
                ${r.slice(2).map((v) => html`<td class="cell num">${v}</td>`)}
                ${this.fill(6)}
              </tr>`;
            })}
            <tr class="r18"><th scope="row" class="row"><div>18</div></th>${this.fill(12)}</tr>
            <tr class="r19"><th scope="row" class="row"><div>19</div></th>${this.fill(12)}</tr>
          </tbody>
        </table>
        <div class="outline"></div>
      </div>
      <div class="scroll">
        <button class="arrow" aria-label="위로 스크롤">${icon("up")}</button>
        <div class="thumb"></div><div class="track"></div>
        <button class="arrow" aria-label="아래로 스크롤">${icon("down")}</button>
      </div>`;
  }
}

@customElement("sheet-tabs")
class SheetTabs extends LitElement {
  static styles = [shared, css`
    :host { display: flex; align-items: center; height: 86px; background: linear-gradient(#9b9b9b, #9b9b9b) 0 0 / calc(100% - 65px) 3px no-repeat #e6e6e6; padding-right: 64px; color: #666; }
    .nav { display: flex; gap: 37px; padding: 0 104px 6px 64px; color: #bdbdbd; }
    .tab { align-self: flex-start; justify-content: center; width: 202px; height: 76px; border: 2px solid #9b9b9b; border-top: 0; border-bottom: 6px solid #217346; background: #fff; color: #217346; font-size: 37px; }
    .add { margin: 0 auto 4px 101px; }
    .hscroll { display: flex; align-items: center; flex: 0 1 1212px; }
    .arrow { justify-content: center; width: 46px; height: 46px; border: 3px solid #ababab; background: #fff; }
    .thumb { flex: 1; height: 46px; border: 3px solid #ababab; background: #fff; }
    .track { flex: 0 0 97px; height: 46px; background: #dadada; }
    .grip { margin-right: 26px; }
  `];
  render() {
    return html`
      <div class="nav"><button aria-label="이전 시트">${icon("prev")}</button><button aria-label="다음 시트">${icon("next")}</button></div>
      <button class="tab">Sheet1</button>
      <button class="add" aria-label="새 시트">${icon("add")}</button>
      <div class="hscroll">
        <span class="grip">${icon("dots")}</span>
        <button class="arrow" aria-label="왼쪽으로 스크롤">${icon("prev")}</button>
        <div class="thumb"></div><div class="track"></div>
        <button class="arrow" aria-label="오른쪽으로 스크롤">${icon("next")}</button>
      </div>`;
  }
}

@customElement("status-bar")
class StatusBar extends LitElement {
  static styles = [shared, css`
    :host { display: flex; align-items: center; height: 65px; padding: 0 24px; border-top: 3px solid #c8c8c8; border-bottom: 2px solid #444; background: #f3f2f1; color: #444; font-size: 40px; line-height: 52px; white-space: nowrap; }
    .record { margin: 0 auto 0 54px; }
    .count { padding-right: 60px; }
    .display { gap: 4px; padding-right: 60px; }
    .views { display: flex; padding-right: 4px; }
    .view { justify-content: center; width: 122px; height: 60px; }
    .view.on { background: #d0cfce; }
    .zoom { display: flex; align-items: center; gap: 2px; }
    .range { width: 306px; height: 34px; background: linear-gradient(#aaa, #aaa) center / 100% 3px no-repeat; }
    .range::-webkit-slider-thumb { appearance: none; width: 15px; height: 34px; background: #777573; }
    .percent { width: 122px; text-align: right; font-size: 36px; }
  `];
  render() {
    return html`
      <span>준비</span>
      <button class="record" aria-label="매크로 기록">${icon("record")}</button>
      <span class="count">개수: 11</span>
      <button class="display">${icon("screen")}디스플레이 설정</button>
      <div class="views">
        <button class="view on" aria-label="기본">${icon("normal")}</button>
        <button class="view" aria-label="페이지 레이아웃">${icon("layout")}</button>
        <button class="view" aria-label="페이지 나누기 미리 보기">${icon("breaks")}</button>
      </div>
      <div class="zoom">
        <button aria-label="축소">${icon("minus")}</button>
        <input class="range" type="range" min="0" max="100" value="50" aria-label="확대/축소" />
        <button aria-label="확대">${icon("plus")}</button>
      </div>
      <span class="percent">100%</span>`;
  }
}

@customElement("app-root")
class AppRoot extends LitElement {
  static styles = css`
    :host { display: flex; flex-direction: column; min-height: 100vh; font-family: "Noto Sans", "Noto Sans CJK KR", sans-serif; background: #e6e6e6; }
  `;
  render() {
    return html`
      <title-bar></title-bar>
      <ribbon-tabs></ribbon-tabs>
      <ribbon-bar></ribbon-bar>
      <formula-bar></formula-bar>
      <sheet-grid></sheet-grid>
      <sheet-tabs></sheet-tabs>
      <status-bar></status-bar>`;
  }
}
